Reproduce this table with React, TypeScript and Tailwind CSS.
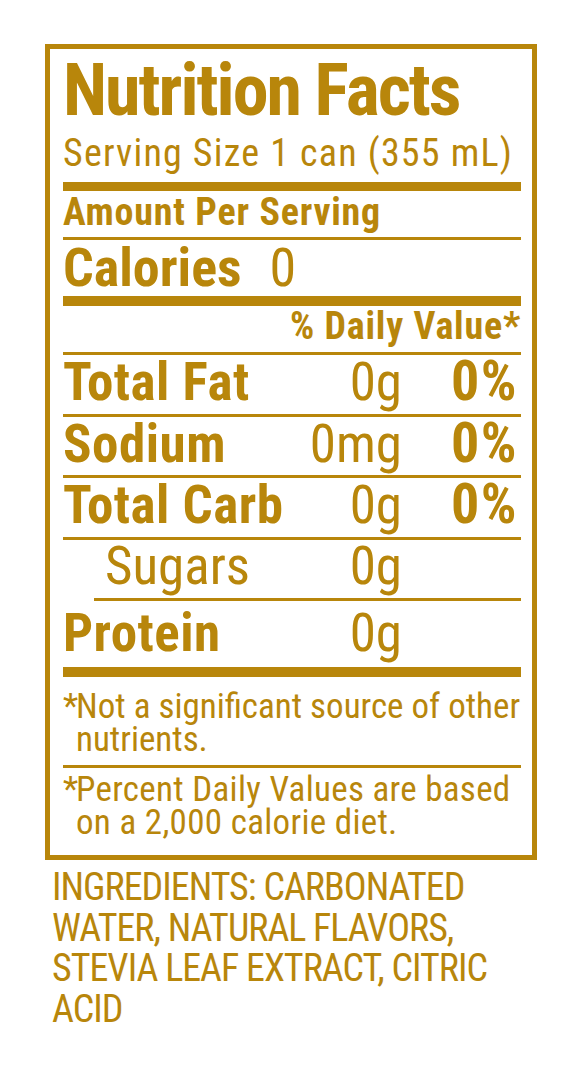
const rows = [
  { label: 'Total Fat', amount: '0g', pct: '0%' },
  { label: 'Sodium', amount: '0mg', pct: '0%' },
  { label: 'Total Carb', amount: '0g', pct: '0%' },
];

function Rule({ h, indent = false }: { h: 'thin' | 'thick'; indent?: boolean }) {
  return (
    <div
      className={`${h === 'thick' ? 'h-[10px]' : 'h-[3px]'} ${indent ? 'ml-[31px]' : ''} bg-[#b8860b]`}
    />
  );
}

export default function App() {
  return (
    <div className="min-h-screen bg-white pt-[44px] pl-[45px] text-[#b8860b] font-['Roboto',sans-serif] [font-stretch:75%]">
      {/* label box */}
      <div className="w-[492px] border-[5px] border-[#b8860b] pl-[13px] pr-[11px] pt-[6px] pb-[16px]">
        <h1 className="text-[72px] leading-[72px] font-bold tracking-[-2px]">Nutrition Facts</h1>
        <div className="mt-[7px] text-[38px] leading-[38px] tracking-[1.2px]">Serving Size 1 can (355 mL)</div>
        <div className="mt-[10px] h-[9px] bg-[#b8860b]" />

        <div className="mt-[2px] text-[38px] leading-[38px] font-bold tracking-[0.8px]">Amount Per Serving</div>
        <div className="mt-[6px]">
          <Rule h="thin" />
        </div>

        <div className="flex items-baseline pt-[1px] h-[56px] leading-[54px]">
          <span className="text-[54px] font-bold">Calories</span>
          <span className="ml-[28px] text-[54px]">0</span>
        </div>
        <Rule h="thick" />

        <div className="mt-[1px] h-[45px] text-right text-[38px] leading-[38px] font-bold tracking-[0.8px]">
          % Daily Value*
        </div>
        <Rule h="thin" />

        {rows.map((r) => (
          <div key={r.label}>
            <div className="flex items-baseline h-[58.5px] leading-[52px]">
              <span className="flex-1 text-[53px] font-bold tracking-[0.5px]">{r.label}</span>
              <span className="text-right text-[53px]">{r.amount}</span>
              <span className="w-[119px] pr-[3px] text-right text-[56px] font-bold tracking-[1.5px]">{r.pct}</span>
            </div>
            <Rule h="thin" />
          </div>
        ))}

        <div className="flex h-[58.5px] leading-[52px]">
          <span className="flex-1 pl-[42px] text-[53px]">Sugars</span>
          <span className="text-right text-[53px]">0g</span>
          <span className="w-[119px]" />
        </div>
        <Rule h="thin" indent />

        <div className="flex h-[66px] pt-[6px] leading-[52px]">
          <span className="flex-1 text-[53px] font-bold tracking-[0.5px]">Protein</span>
          <span className="text-right text-[53px]">0g</span>
          <span className="w-[119px]" />
        </div>
        <Rule h="thick" />

        <div className="mt-[13px] flex text-[35px] leading-[33px]">
          <span className="w-[13px]">*</span>
          <p className="flex-1">Not a significant source of other nutrients.</p>
        </div>
        <div className="mt-[9px]">
          <Rule h="thin" />
        </div>
        <div className="mt-[5px] flex text-[35px] leading-[33px] tracking-[0.3px]">
          <span className="w-[13px]">*</span>
          <p className="flex-1">
            Percent Daily Values are based
            <br />
            on a 2,000 calorie diet.
          </p>
        </div>
      </div>

      <p className="mt-[7px] pl-[7px] text-[38px] leading-[40.5px] uppercase tracking-[-1px]">
        Ingredients: Carbonated
        <br />
        Water, Natural Flavors,
        <br />
        Stevia Leaf Extract, Citric
        <br />
        Acid
      </p>
    </div>
  );
}
